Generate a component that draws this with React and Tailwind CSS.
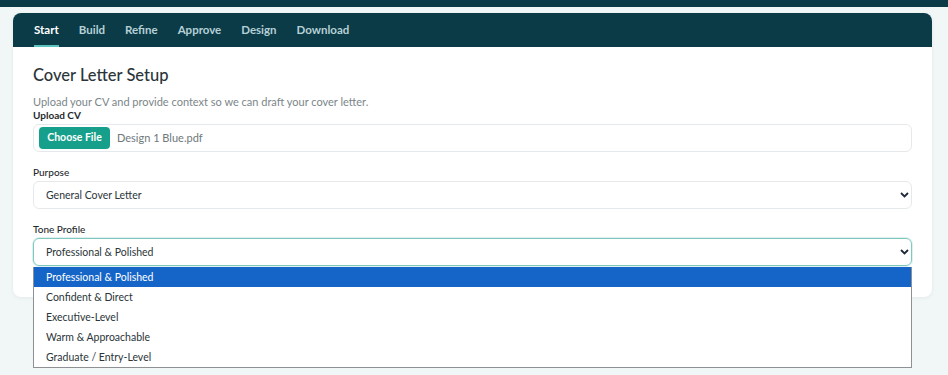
import React from "react";

const tabs = ["Start", "Build", "Refine", "Approve", "Design", "Download"];
const tones = [
  "Professional & Polished",
  "Confident & Direct",
  "Executive-Level",
  "Warm & Approachable",
  "Graduate / Entry-Level",
];

const Chevron = () => (
  <svg width="9" height="6" viewBox="0 0 9 6" className="shrink-0">
    <path d="M1 1l3.5 3.5L8 1" fill="none" stroke="#1f2937" strokeWidth="1.8" />
  </svg>
);

export default function App() {
  return (
    <div
      className="min-h-[375px] bg-[#f1f6f7] text-[#2b3539]"
      style={{ fontFamily: 'Lato, "Noto Sans", sans-serif' }}
    >
      <div className="h-[7px] bg-[#0b3b47]" />
      <div className="pl-[13px] pr-[16px] pt-[6px]">
        <div className="rounded-lg bg-white shadow-[0_1px_4px_rgba(0,0,0,0.06)]">
          {/* Tabs */}
          <div className="flex h-[34px] items-stretch gap-[20px] rounded-t-lg bg-[#0b3b47] pl-[21px]">
            {tabs.map((t, i) => (
              <div
                key={t}
                className={
                  "flex items-center text-[11.5px] font-bold " +
                  (i === 0
                    ? "border-b-2 border-[#5cc2bd] pt-[2px] text-white"
                    : "border-b-2 border-transparent pt-[2px] text-[#b5d0d6]")
                }
              >
                {t}
              </div>
            ))}
          </div>

          {/* Body */}
          <div className="px-[20px] pt-[16px] pb-[31px]">
            <h2 className="text-[16.5px] leading-[24px] font-medium text-[#2b3539]">
              Cover Letter Setup
            </h2>
            <p className="mt-[8px] text-[11px] leading-[14px] text-[#7b8689]">
              Upload your CV and provide context so we can draft your cover letter.
            </p>
            <div className="text-[10px] leading-[13px] font-bold text-[#1f2a2e]">Upload CV</div>
            <div className="mt-[2px] flex h-[28px] items-center rounded-md border border-[#e6e9eb] pl-[5px]">
              <div className="flex h-[22px] w-[71px] items-center justify-center rounded-[4px] bg-[#16a08b] text-[10.5px] font-bold text-white">
                Choose File
              </div>
              <span className="ml-[7px] text-[11px] text-[#6f787b]">Design 1 Blue.pdf</span>
            </div>

            <div className="mt-[13px] text-[10px] leading-[14px] font-medium text-[#1f2a2e]">Purpose</div>
            <div className="mt-[2px] flex h-[28px] items-center justify-between rounded-md border border-[#e6e9eb] pl-[12px] pr-[2px]">
              <span className="pt-[2px] text-[10.5px] text-[#2b3539]">General Cover Letter</span>
              <Chevron />
            </div>

            <div className="mt-[13px] text-[10px] leading-[14px] font-medium text-[#1f2a2e]">Tone Profile</div>
            <div className="relative mt-[2px]">
              <div className="flex h-[28px] items-center justify-between rounded-md border border-[#7ec8c0] pl-[12px] pr-[2px] shadow-[0_0_0_1px_rgba(126,200,192,0.25)]">
                <span className="pt-[2px] text-[10.5px] text-[#2b3539]">Professional &amp; Polished</span>
                <Chevron />
              </div>
              <div className="absolute left-0 right-0 top-[29px] z-10 border border-[#8e9193] border-t-0 bg-white">
                {tones.map((t, i) => (
                  <div
                    key={t}
                    className={
                      "flex h-[20px] items-center pl-[12px] pt-[2px] text-[10.5px] " +
                      (i === 0 ? "bg-[#1565c8] text-white" : "text-[#2b3539]")
                    }
                  >
                    {t}
                  </div>
                ))}
              </div>
            </div>
          </div>
        </div>
      </div>
    </div>
  );
}
